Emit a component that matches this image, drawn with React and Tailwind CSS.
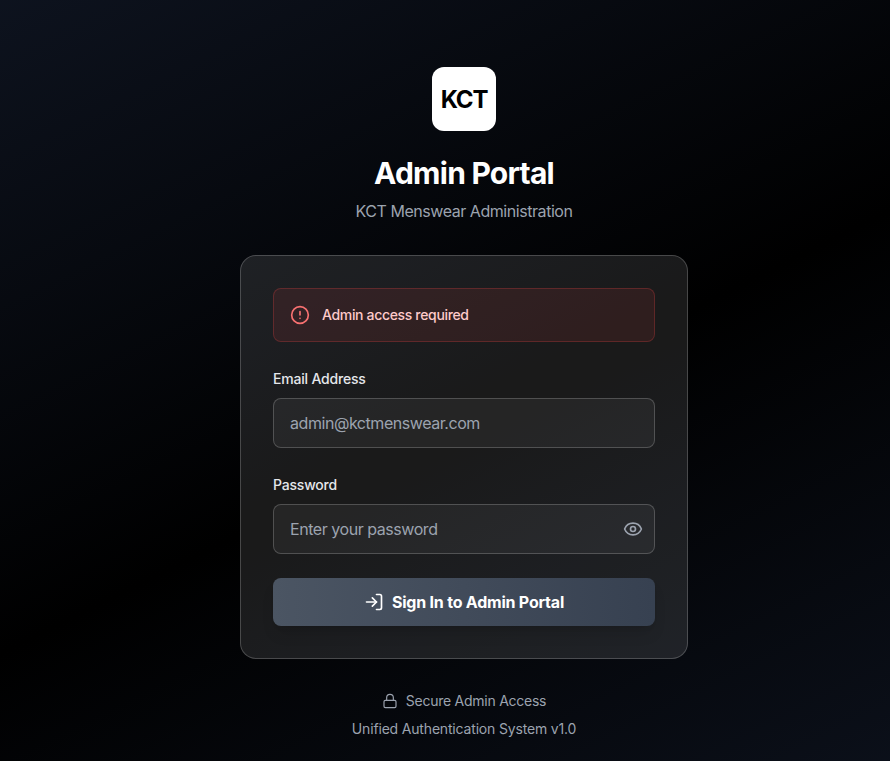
import { useState } from "react";
import { CircleAlert, Eye, EyeOff, Lock, LogIn } from "lucide-react";

const fieldClass =
  "h-[50px] w-full rounded-lg border border-white/20 bg-white/5 px-4 text-base font-normal tracking-[-0.028em] text-white placeholder:text-[#9ca3af] focus:outline-none";

const labelClass =
  "flex flex-col gap-1.5 text-sm leading-[26px] font-medium tracking-[-0.014em] text-[#e5e7eb]";

export default function App() {
  const [visible, setVisible] = useState(false);

  return (
    <div className="flex h-[761px] w-[928px] max-w-none flex-col items-center overflow-hidden bg-[linear-gradient(to_bottom_right,#111827,#000_50%,#111827)] bg-[length:1700px_846px] bg-[position:-386px_0] bg-no-repeat pt-[67px] font-['Inter',sans-serif]">
      <header className="flex flex-col items-center">
        <div className="flex size-16 items-center justify-center rounded-xl bg-white pt-0.5 text-2xl font-bold tracking-[-0.05em] text-black">
          KCT
        </div>
        <h1 className="mt-6 text-[30px] leading-9 font-bold tracking-[-0.025em] text-white">
          Admin Portal
        </h1>
        <p className="mt-2 text-base tracking-[-0.028em] text-[#9ca3af]">
          KCT Menswear Administration
        </p>
      </header>

      <main className="mt-8 w-[448px] rounded-2xl border border-white/20 bg-white/10 p-8">
        <div className="mb-6 flex h-[54px] items-center gap-3 rounded-lg border border-[#ef4444]/25 bg-[#ef4444]/10 px-4">
          <CircleAlert className="size-5 text-[#f87171]" />
          <span className="text-sm font-medium tracking-[-0.024em] text-[#fecaca]">
            Admin access required
          </span>
        </div>

        <form className="flex flex-col gap-6" onSubmit={(e) => e.preventDefault()}>
          <label className={labelClass}>
            Email Address
            <input type="email" placeholder="admin@kctmenswear.com" className={fieldClass} />
          </label>
          <label className={labelClass}>
            Password
            <span className="relative flex">
              <input
                type={visible ? "text" : "password"}
                placeholder="Enter your password"
                className={fieldClass}
              />
              <button
                type="button"
                aria-label="Toggle password"
                onClick={() => setVisible(!visible)}
                className="absolute top-[15px] right-3 text-[#9ca3af]"
              >
                {visible ? <EyeOff className="size-5" /> : <Eye className="size-5" />}
              </button>
            </span>
          </label>
          <button className="flex h-12 items-center justify-center gap-2 rounded-lg bg-[linear-gradient(to_right,#4b5563,#374151)] text-base font-bold tracking-[-0.0135em] text-white shadow-lg">
            <LogIn className="size-5" />
            Sign In to Admin Portal
          </button>
        </form>
      </main>

      <footer className="mt-8 flex flex-col items-center gap-2 text-sm tracking-[-0.0125em] text-[#9ca3af]">
        <div className="flex items-center gap-2">
          <Lock className="size-4" strokeWidth={1.75} />
          <span className="tracking-[-0.018em]">Secure Admin Access</span>
        </div>
        <p>Unified Authentication System v1.0</p>
      </footer>
    </div>
  );
}
